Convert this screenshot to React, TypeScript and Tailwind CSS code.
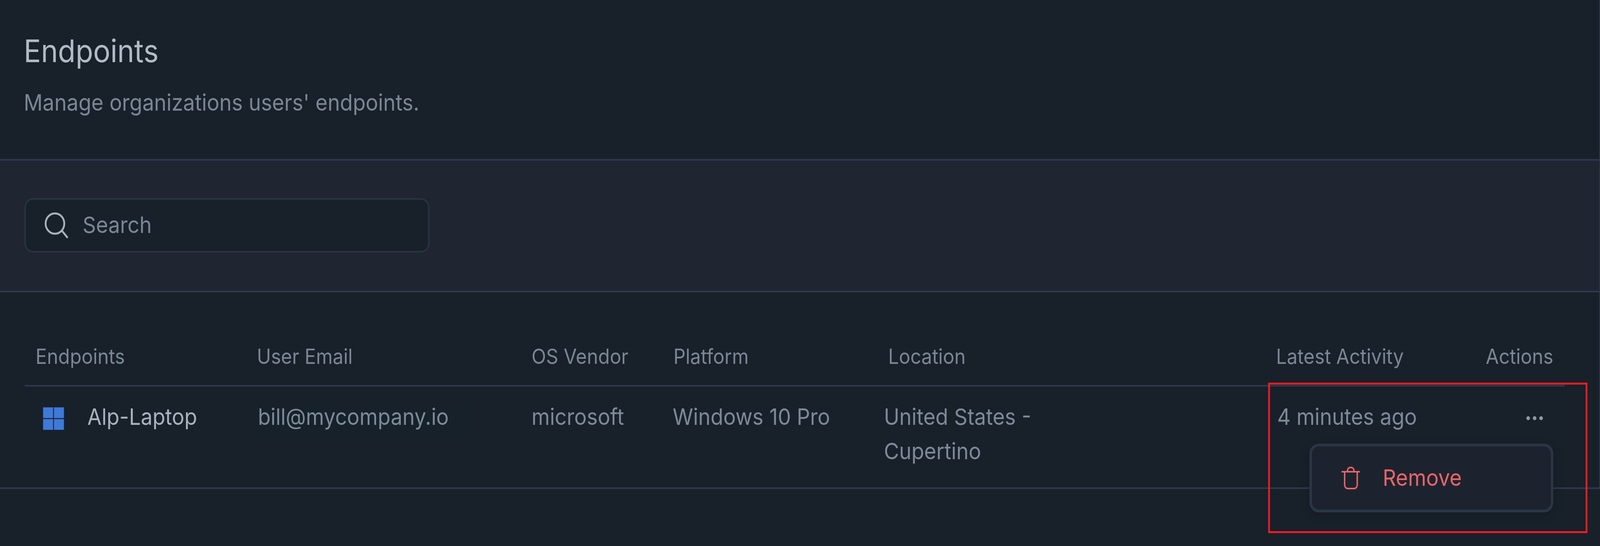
const columns = "grid grid-cols-[619px_765px_390px_591px_1095px_581px_200px]";

function SearchIcon() {
  return (
    <svg width="68" height="68" viewBox="0 0 68 68" fill="none" stroke="#a9b1bc" strokeWidth="5" strokeLinecap="round" className="shrink-0">
      <circle cx="29" cy="29" r="26" />
      <path d="M49 48 L63 64" />
    </svg>
  );
}

function TrashIcon() {
  return (
    <svg width="52" height="58" viewBox="0 0 52 58" fill="none" stroke="#e5666b" strokeWidth="4" strokeLinecap="round" className="shrink-0">
      <path d="M2 13 H50" />
      <path d="M9 13 V47 a9 9 0 0 0 9 9 H35 a9 9 0 0 0 9 -9 V13" />
      <path d="M17 13 V10 a8 8 0 0 1 8 -8 H27 a8 8 0 0 1 8 8 V13" />
    </svg>
  );
}

function WindowsIcon() {
  return (
    <div className="mt-[20px] ml-[24px] grid h-[58px] w-[58px] shrink-0 grid-cols-2 gap-[2px]">
      <div className="border border-[#3564ae] bg-[#3f7ad9]" />
      <div className="border border-[#3564ae] bg-[#3f7ad9]" />
      <div className="border border-[#3564ae] bg-[#3f7ad9]" />
      <div className="border border-[#3564ae] bg-[#3f7ad9]" />
    </div>
  );
}

export default function App() {
  return (
    <div className="min-h-[1397px] w-full overflow-hidden bg-[#18202a] font-['Inter',sans-serif]">
      <div className="w-[4455px] origin-top-left scale-x-[0.919416] border-r-2 border-[#2e3a4c]">
        <header className="h-[411px] border-b-4 border-[#2e3a4c] pl-[66px] pt-[83px]">
          <h1 className="text-[80px] leading-[94px] font-normal text-[#b2bac5]">Endpoints</h1>
          <p className="mt-[50px] text-[58.3px] leading-[70px] text-[#7a8794]">Manage organizations users' endpoints.</p>
        </header>

        <div className="h-[337px] border-b-4 border-[#2e3a4c] bg-[#1f2631] pl-[68px] pt-[96px]">
          <div className="flex h-[139px] w-[1128px] items-center gap-[38px] rounded-[24px] border-4 border-[#2a3340] bg-[#18202a] pl-[52px]">
            <SearchIcon />
            <span className="mb-[4px] text-[58px] leading-[70px] text-[#7a8794]">Search</span>
          </div>
        </div>

        <div className="ml-[69px] w-[4288px] border-b-4 border-[#2e3a4c] pl-[27px] pt-[122px] pb-[31px]">
          <div className={`${columns} text-[53px] leading-[84px] text-[#7a8794]`}>
            <div className="pl-[3px]">Endpoints</div>
            <div>User Email</div>
            <div>OS Vendor</div>
            <div className="pl-[5px]">Platform</div>
            <div className="pl-[12px]">Location</div>
            <div className="-ml-[3px]">Latest Activity</div>
            <div>Actions</div>
          </div>
        </div>

        <div className="relative border-b-4 border-[#2e3a4c] pl-[96px] pt-[33px] pb-[49px]">
          <div className={`${columns} text-[58px] leading-[88px] text-[#7d8a97]`}>
            <div className="flex items-start gap-[65px]">
              <WindowsIcon />
              <span className="text-[#a9b2bd]">Alp-Laptop</span>
            </div>
            <div className="-ml-[11px] mt-[10px] h-[91px] w-[611px] bg-[#17212a] pl-[14px] leading-[68px]">bill@mycompany.io</div>
            <div>microsoft</div>
            <div className="pl-[3px]">Windows 10 Pro</div>
            <div className="max-w-[520px]">United States - Cupertino</div>
            <div>4 minutes ago</div>
            <div className="flex h-[88px] items-center gap-[8px] pl-[113px] pt-[8px]">
              <span className="h-[10px] w-[10px] rounded-full bg-[#8f9aa6]" />
              <span className="h-[10px] w-[10px] rounded-full bg-[#8f9aa6]" />
              <span className="h-[10px] w-[10px] rounded-full bg-[#8f9aa6]" />
            </div>
          </div>

          <div className="absolute left-[3646px] top-[146px] flex h-[176px] w-[679px] items-center gap-[63px] rounded-[26px] border-[7px] border-[#2b3544] bg-[#1d232e] pl-[82px] shadow-[0_6px_24px_rgba(0,0,0,0.18)]">
            <TrashIcon />
            <span className="mb-[2px] text-[58px] leading-[70px] text-[#e5666b]">Remove</span>
          </div>

          <div className="absolute left-[3531px] top-[-10px] h-[385px] w-[889px] border-[5px] border-[#ed1c24]" />
        </div>
      </div>
    </div>
  );
}
